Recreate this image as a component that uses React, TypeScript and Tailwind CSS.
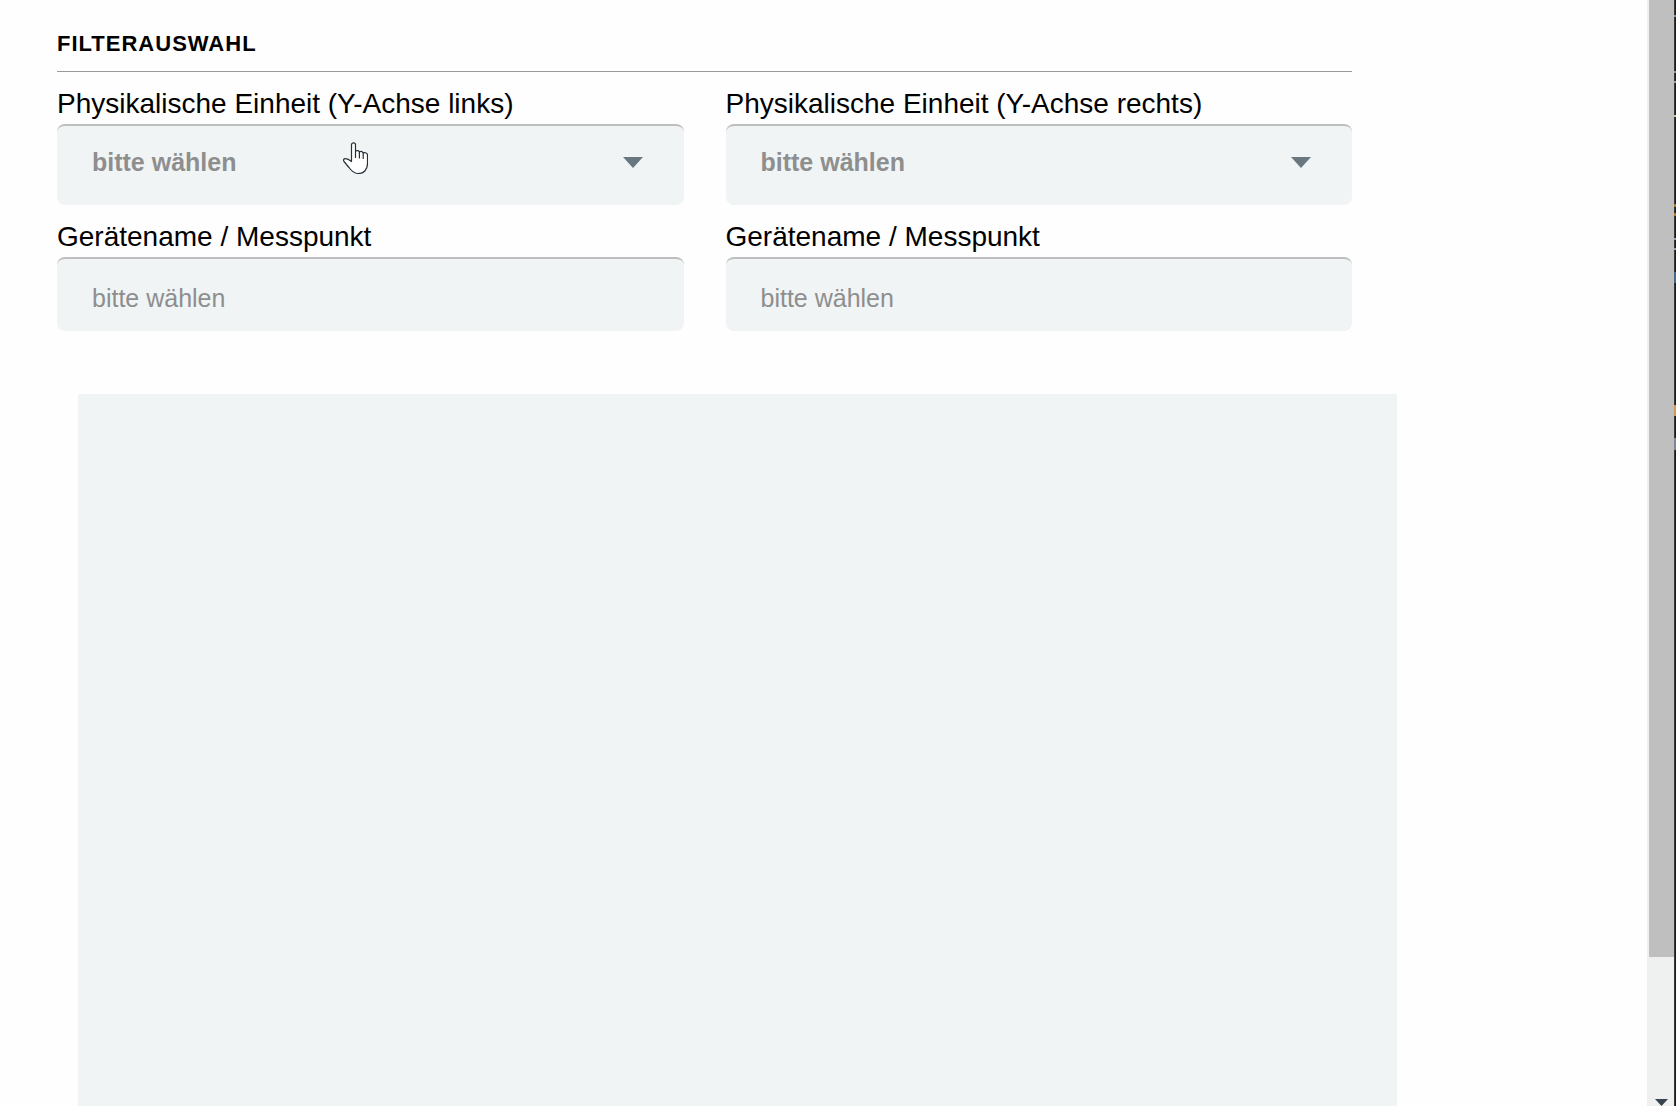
type Axis = { id: string; label: string };

const axes: Axis[] = [
  { id: "left", label: "Physikalische Einheit (Y-Achse links)" },
  { id: "right", label: "Physikalische Einheit (Y-Achse rechts)" },
];

const marks = [
  { y: 15, h: 2, color: "#6d98bd" },
  { y: 71, h: 2, color: "#8b9cb0" },
  { y: 81, h: 2, color: "#8b9cb0" },
  { y: 115, h: 2, color: "#d8c39a" },
  { y: 204, h: 3, color: "#a9782a" },
  { y: 213, h: 3, color: "#a9782a" },
  { y: 238, h: 2, color: "#8b9cb0" },
  { y: 248, h: 2, color: "#8b9cb0" },
  { y: 272, h: 11, color: "#44698a" },
  { y: 405, h: 11, color: "#c99a58" },
  { y: 438, h: 12, color: "#7b8796" },
];

const labelClass = "block pt-3.5 pb-0.5 text-[28px] leading-9 text-black";
const fieldClass =
  "block w-full rounded-lg border-t-2 border-[#bebebe] bg-[#f0f4f5] pl-[35px] text-[25px] text-[#8e8e8e] outline-none";

const UnitSelect = ({ id, label }: Axis) => (
  <div>
    <label htmlFor={`unit-${id}`} className={labelClass}>
      {label}
    </label>
    <div className="relative">
      <select
        id={`unit-${id}`}
        className={`${fieldClass} h-[81px] appearance-none pr-20 pb-1.5 font-bold`}
      >
        <option>bitte wählen</option>
      </select>
      <svg
        className="pointer-events-none absolute top-[33px] right-[41px] h-[11px] w-5"
        viewBox="0 0 20 11"
        aria-hidden="true"
      >
        <path d="M0 0h20L10 11z" fill="#687780" />
      </svg>
    </div>
  </div>
);

const DeviceInput = ({ id }: { id: string }) => (
  <div>
    <label htmlFor={`device-${id}`} className={labelClass}>
      Gerätename / Messpunkt
    </label>
    <input
      id={`device-${id}`}
      type="text"
      placeholder="bitte wählen"
      className={`${fieldClass} h-[74px] pt-1.5 pr-9 placeholder:text-[#8e8e8e]`}
    />
  </div>
);

const HandCursor = () => (
  <svg
    className="pointer-events-none absolute top-[142px] left-[343px] h-8 w-[25px]"
    viewBox="0 0 25 32"
    aria-hidden="true"
  >
    <path
      d="M8.5 19.5V2.8a2 2 0 0 1 4 0V9c1.5-.9 3.3-.4 3.9.9 1.5-.7 3.1-.2 3.7 1 2-.6 4.4.1 4.4 2.1v8.5c0 6-3.5 10-9 10-4.5 0-7-2.5-9.5-6L1 19.5c-1-1.6-.2-3 1.6-2.9 2 .1 4 1.4 5.9 2.9z"
      fill="#fff"
      stroke="#26303a"
      strokeWidth="1.2"
      strokeLinejoin="round"
    />
    <path
      d="M12.5 9v6.5M16.4 9.9v6M20.2 10.9v5.5"
      fill="none"
      stroke="#26303a"
      strokeWidth="1.2"
      strokeLinecap="round"
    />
  </svg>
);

const Scrollbar = () => (
  <div className="relative flex h-screen w-[27px] shrink-0 flex-col overflow-hidden bg-[#eff1f1] pl-0.5">
    <div className="grow-[957] bg-[#bfbfbf]" />
    <div className="grow-[149]" />
    <svg
      className="absolute bottom-0 left-2 h-[7px] w-[13px]"
      viewBox="0 0 13 7"
      aria-hidden="true"
    >
      <path d="M0 0h13L6.5 7z" fill="#38444f" />
    </svg>
  </div>
);

const WindowEdge = () => (
  <svg className="h-screen w-0.5 shrink-0 bg-[#1c1c1a]" aria-hidden="true">
    <rect width="1" height="100%" fill="#383836" />
    {marks.map(({ y, h, color }) => (
      <rect key={y} y={y} width="2" height={h} fill={color} />
    ))}
  </svg>
);

export default function App() {
  return (
    <div className="flex min-h-screen bg-[#fefefe] font-['Liberation_Sans',Arial,sans-serif]">
      <main className="relative flex min-w-0 flex-1 flex-col">
        <form className="mr-[295px] ml-[57px]">
          <h2 className="border-b border-[#999] pt-7 pb-[11px] text-[22px] leading-8 font-bold tracking-[1px] text-black">
            FILTERAUSWAHL
          </h2>
          <div className="grid grid-cols-2 gap-x-[42px]">
            {axes.map((axis) => (
              <UnitSelect key={axis.id} {...axis} />
            ))}
            {axes.map((axis) => (
              <DeviceInput key={axis.id} id={axis.id} />
            ))}
          </div>
        </form>
        <section
          aria-label="Diagramm"
          className="mt-[63px] mr-[250px] ml-[78px] flex-1 bg-[#f0f4f5]"
        />
        <HandCursor />
      </main>
      <Scrollbar />
      <WindowEdge />
    </div>
  );
}
